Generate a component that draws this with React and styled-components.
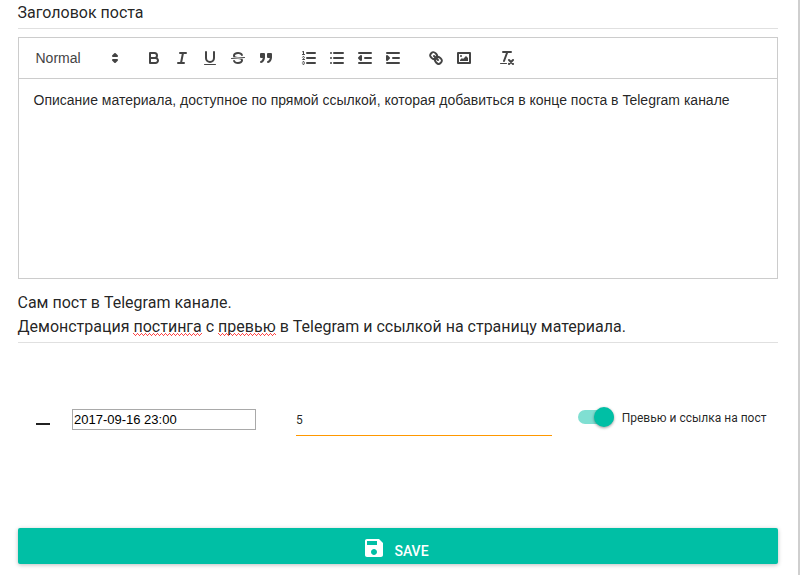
import React from "react";
import styled, { createGlobalStyle } from "styled-components";

const GlobalStyle = createGlobalStyle`
  * { box-sizing: border-box; }
  html, body { margin: 0; background: #fff; overflow: hidden; }
  body { font-family: Roboto, "Noto Sans", sans-serif; color: rgba(0, 0, 0, 0.87); }
`;

const Page = styled.main`
  width: 800px;
  height: 575px;
  padding: 0 20px 0 18px;
  border-right: 2px solid #cfcfcf;
  display: flex;
  flex-direction: column;
  overflow: hidden;
`;

const TextField = styled.div`
  font-size: 16px;
  line-height: 24px;
  height: ${(p) => p.$height}px;
  padding-top: 1px;
  text-indent: -0.5px;
  border-bottom: 1px solid #e0e0e0;
`;

const TextLine = styled.div``;

const Misspelled = styled.span`
  background-image:
    linear-gradient(90deg, #f44 1px, transparent 1px),
    linear-gradient(90deg, transparent 1px, #f44 1px, #f44 2px, transparent 2px, transparent 3px, #f44 3px),
    linear-gradient(90deg, transparent 2px, #f44 2px, #f44 3px, transparent 3px);
  background-repeat: repeat-x;
  background-size: 4px 1px;
  background-position: 0 calc(100% - 2px), 0 calc(100% - 1px), 0 100%;
`;

const Editor = styled.section`
  width: 760px;
  height: 242px;
  margin: 8px 0 11px;
  border: 1px solid #ccc;
  font-family: "Liberation Sans", Arial, sans-serif;
`;

const Toolbar = styled.div`
  display: flex;
  gap: 15px;
  height: 41px;
  padding: 8px;
  border-bottom: 1px solid #ccc;
`;

const ToolGroup = styled.div`
  display: flex;
`;

const FormatPicker = styled.div`
  display: flex;
  align-items: center;
  justify-content: space-between;
  width: 98px;
  height: 24px;
  padding: 0 1px 0 8.5px;
  color: #444;
  font-size: 14px;
  font-weight: 500;
  line-height: 22px;
`;

const ToolButton = styled.button`
  width: 28px;
  height: 24px;
  padding: 3px 5px;
  border: 0;
  background: none;
`;

const ToolIcon = styled.svg`
  display: block;
  width: 18px;
  height: 18px;
  fill: none;
  stroke: #444;
  stroke-width: 2;
  stroke-linecap: round;
  stroke-linejoin: round;
  .thin { stroke-width: 1; }
  .fill { fill: #444; stroke: none; }
  .both { fill: #444; }
  .even { fill-rule: evenodd; }
`;

const EditorBody = styled.div`
  padding: 11px 14.5px;
  font-size: 14px;
  line-height: 20px;
`;

const Settings = styled.div`
  display: flex;
  align-items: flex-start;
  height: 185px;
  padding-top: 64px;
`;

const RemoveMark = styled.div`
  width: 14px;
  height: 2px;
  margin: 16px 22px 0 18px;
  background: #212121;
`;

const DateInput = styled.input`
  width: 184px;
  height: 21px;
  margin: 2px 40px 0 0;
  padding: 1px;
  border: 1px solid #a9a9a9;
  border-radius: 0;
  background: #fff;
  color: #000;
  font: 13px "Liberation Sans", Arial, sans-serif;
`;

const CountField = styled.div`
  width: 256px;
  height: 29px;
  margin-right: 26px;
  border-bottom: 1px solid #ff9800;
  font-size: 12px;
  line-height: 26px;
`;

const Switch = styled.div`
  display: flex;
  align-items: center;
  height: 20px;
  font-size: 12px;
  white-space: nowrap;
`;

const Track = styled.span`
  display: flex;
  align-items: center;
  justify-content: flex-end;
  width: 36px;
  height: 14px;
  margin-right: 7.7px;
  border-radius: 7px;
  background: #80dfd2;
`;

const Thumb = styled.span`
  flex: none;
  width: 20px;
  height: 20px;
  border-radius: 50%;
  background: #00bfa5;
  box-shadow: 0 1px 3px rgba(0, 0, 0, 0.4);
`;

const SwitchLabel = styled.span`
  line-height: 20px;
  padding-top: 1px;
`;

const SaveButton = styled.button`
  display: flex;
  align-items: flex-start;
  justify-content: center;
  width: 760px;
  height: 36px;
  padding: 8px 5px 0 0;
  border: 0;
  border-radius: 2px;
  background: #00bfa5;
  color: #fff;
  font: 500 14px Roboto, sans-serif;
  box-shadow: 0 1px 4px rgba(0, 0, 0, 0.26);
`;

const SaveIcon = styled.svg`
  width: 24px;
  height: 24px;
  fill: currentColor;
  margin-right: 8px;
`;

const SaveText = styled.span`
  line-height: 30px;
`;

const icons = {
  picker: (<><polygon points="7 11 9 13 11 11 7 11" /><polygon points="7 7 9 5 11 7 7 7" /></>),
  bold: (<>
    <path d="M5,4H9.5A2.5,2.5,0,0,1,12,6.5v0A2.5,2.5,0,0,1,9.5,9H5A0,0,0,0,1,5,9V4A0,0,0,0,1,5,4Z" />
    <path d="M5,9h5.5A2.5,2.5,0,0,1,13,11.5v0A2.5,2.5,0,0,1,10.5,14H5a0,0,0,0,1,0,0V9A0,0,0,0,1,5,9Z" />
  </>),
  italic: (<><path d="M7,4H13M5,14H11M8,14L10,4" /></>),
  underline: (<>
    <path d="M5,3V9a4.012,4.012,0,0,0,4,4H9a4.012,4.012,0,0,0,4-4V3" />
    <rect className="fill" height="1" width="12" rx="0.5" x="3" y="15" />
  </>),
  strike: (<>
    <line className="thin" x1="15.5" x2="2.5" y1="8.5" y2="9.5" />
    <path className="fill" d="M9.007,8C6.542,7.791,6,7.519,6,6.5,6,5.792,7.283,5,9,5c1.571,0,2.765.679,2.969,1.309a1,1,0,0,0,1.9-.617C13.356,4.106,11.354,3,9,3,6.2,3,4,4.538,4,6.5a3.2,3.2,0,0,0,.5,1.843Z" />
    <path className="fill" d="M8.984,10C11.457,10.208,12,10.479,12,11.5c0,0.708-1.283,1.5-3,1.5-1.571,0-2.765-.679-2.969-1.309a1,1,0,1,0-1.9.617C4.644,13.894,6.646,15,9,15c2.8,0,5-1.538,5-3.5a3.2,3.2,0,0,0-.5-1.843Z" />
  </>),
  quote: (<>
    <rect className="both" height="3" width="3" x="4" y="5" />
    <rect className="both" height="3" width="3" x="11" y="5" />
    <path className="both even" d="M7,8c0,4.031-3,5-3,5" />
    <path className="both even" d="M14,8c0,4.031-3,5-3,5" />
  </>),
  ordered: (<>
    <path d="M7,4H15M7,9H15M7,14H15" />
    <line className="thin" x1="2.5" x2="4.5" y1="5.5" y2="5.5" />
    <path className="fill" d="M3.5,6A0.5,0.5,0,0,1,3,5.5V3.085l-0.276.138A0.5,0.5,0,0,1,2.053,3c-0.124-.247-0.023-0.324.224-0.447l1-.5A0.5,0.5,0,0,1,4,2.5v3A0.5,0.5,0,0,1,3.5,6Z" />
    <path className="thin" d="M4.5,10.5h-2c0-.234,1.85-1.076,1.85-2.234A0.959,0.959,0,0,0,2.5,8.156" />
    <path className="thin" d="M2.5,14.846a0.959,0.959,0,0,0,1.85-.109A0.7,0.7,0,0,0,3.75,14a0.688,0.688,0,0,0,.6-0.736,0.959,0.959,0,0,0-1.85-.109" />
  </>),
  bullet: (<><path d="M6,4H15M6,9H15M6,14H15M3,4H3M3,9H3M3,14H3" /></>),
  outdent: (<><path d="M3,14H15M3,4H15M9,9H15" /><polyline className="both" points="5 7 5 11 3 9 5 7" /></>),
  indent: (<><path d="M3,14H15M3,4H15M9,9H15" /><polyline className="both" points="3 7 3 11 5 9 3 7" /></>),
  link: (<>
    <line x1="7" x2="11" y1="7" y2="11" />
    <path d="M8.9,4.577a3.476,3.476,0,0,1,.36,4.679A3.476,3.476,0,0,1,4.577,8.9C3.185,7.5,2.035,6.4,4.217,4.217S7.5,3.185,8.9,4.577Z" />
    <path d="M13.423,9.1a3.476,3.476,0,0,0-4.679-.36,3.476,3.476,0,0,0,.36,4.679c1.392,1.392,2.5,2.542,4.679.36S14.815,10.5,13.423,9.1Z" />
  </>),
  image: (<>
    <rect height="10" width="12" x="3" y="4" />
    <circle className="fill" cx="6" cy="7" r="1" />
    <polyline className="fill even" points="5 12 5 11 7 9 8 10 11 7 13 9 13 12 5 12" />
  </>),
  clean: (<>
    <path d="M5,3H13M6,12L9.35,3M11,11L15,15M15,11L11,15" />
    <rect className="fill" height="1" width="7" rx="0.5" x="2" y="14" />
  </>),
};

const groups = [
  ["bold", "italic", "underline", "strike", "quote"],
  ["ordered", "bullet", "outdent", "indent"],
  ["link", "image"],
  ["clean"],
];

export default function App() {
  return (
    <>
      <GlobalStyle />
      <Page>
        <TextField $height={29}>Заголовок поста</TextField>
        <Editor>
          <Toolbar>
            <FormatPicker>
              Normal
              <ToolIcon viewBox="0 0 18 18">{icons.picker}</ToolIcon>
            </FormatPicker>
            {groups.map((group) => (
              <ToolGroup key={group[0]}>
                {group.map((name) => (
                  <ToolButton key={name} type="button" aria-label={name}>
                    <ToolIcon viewBox="0 0 18 18">{icons[name]}</ToolIcon>
                  </ToolButton>
                ))}
              </ToolGroup>
            ))}
          </Toolbar>
          <EditorBody>
            Описание материала, доступное по прямой ссылкой, которая добавиться в конце поста в Telegram канале
          </EditorBody>
        </Editor>
        <TextField $height={53}>
          <TextLine>Сам пост в Telegram канале.</TextLine>
          <TextLine>
            Демонстрация <Misspelled>постинга</Misspelled> с <Misspelled>превью</Misspelled> в Telegram и ссылкой на
            страницу материала.
          </TextLine>
        </TextField>
        <Settings>
          <RemoveMark />
          <DateInput defaultValue="2017-09-16 23:00" />
          <CountField>5</CountField>
          <Switch>
            <Track>
              <Thumb />
            </Track>
            <SwitchLabel>Превью и ссылка на пост</SwitchLabel>
          </Switch>
        </Settings>
        <SaveButton type="button">
          <SaveIcon viewBox="0 0 24 24">
            <path d="M17 3H5c-1.11 0-2 .9-2 2v14c0 1.1.89 2 2 2h14c1.1 0 2-.9 2-2V7l-4-4zm-5 16c-1.66 0-3-1.34-3-3s1.34-3 3-3 3 1.34 3 3-1.34 3-3 3zm3-10H5V5h10v4z" />
          </SaveIcon>
          <SaveText>SAVE</SaveText>
        </SaveButton>
      </Page>
    </>
  );
}
